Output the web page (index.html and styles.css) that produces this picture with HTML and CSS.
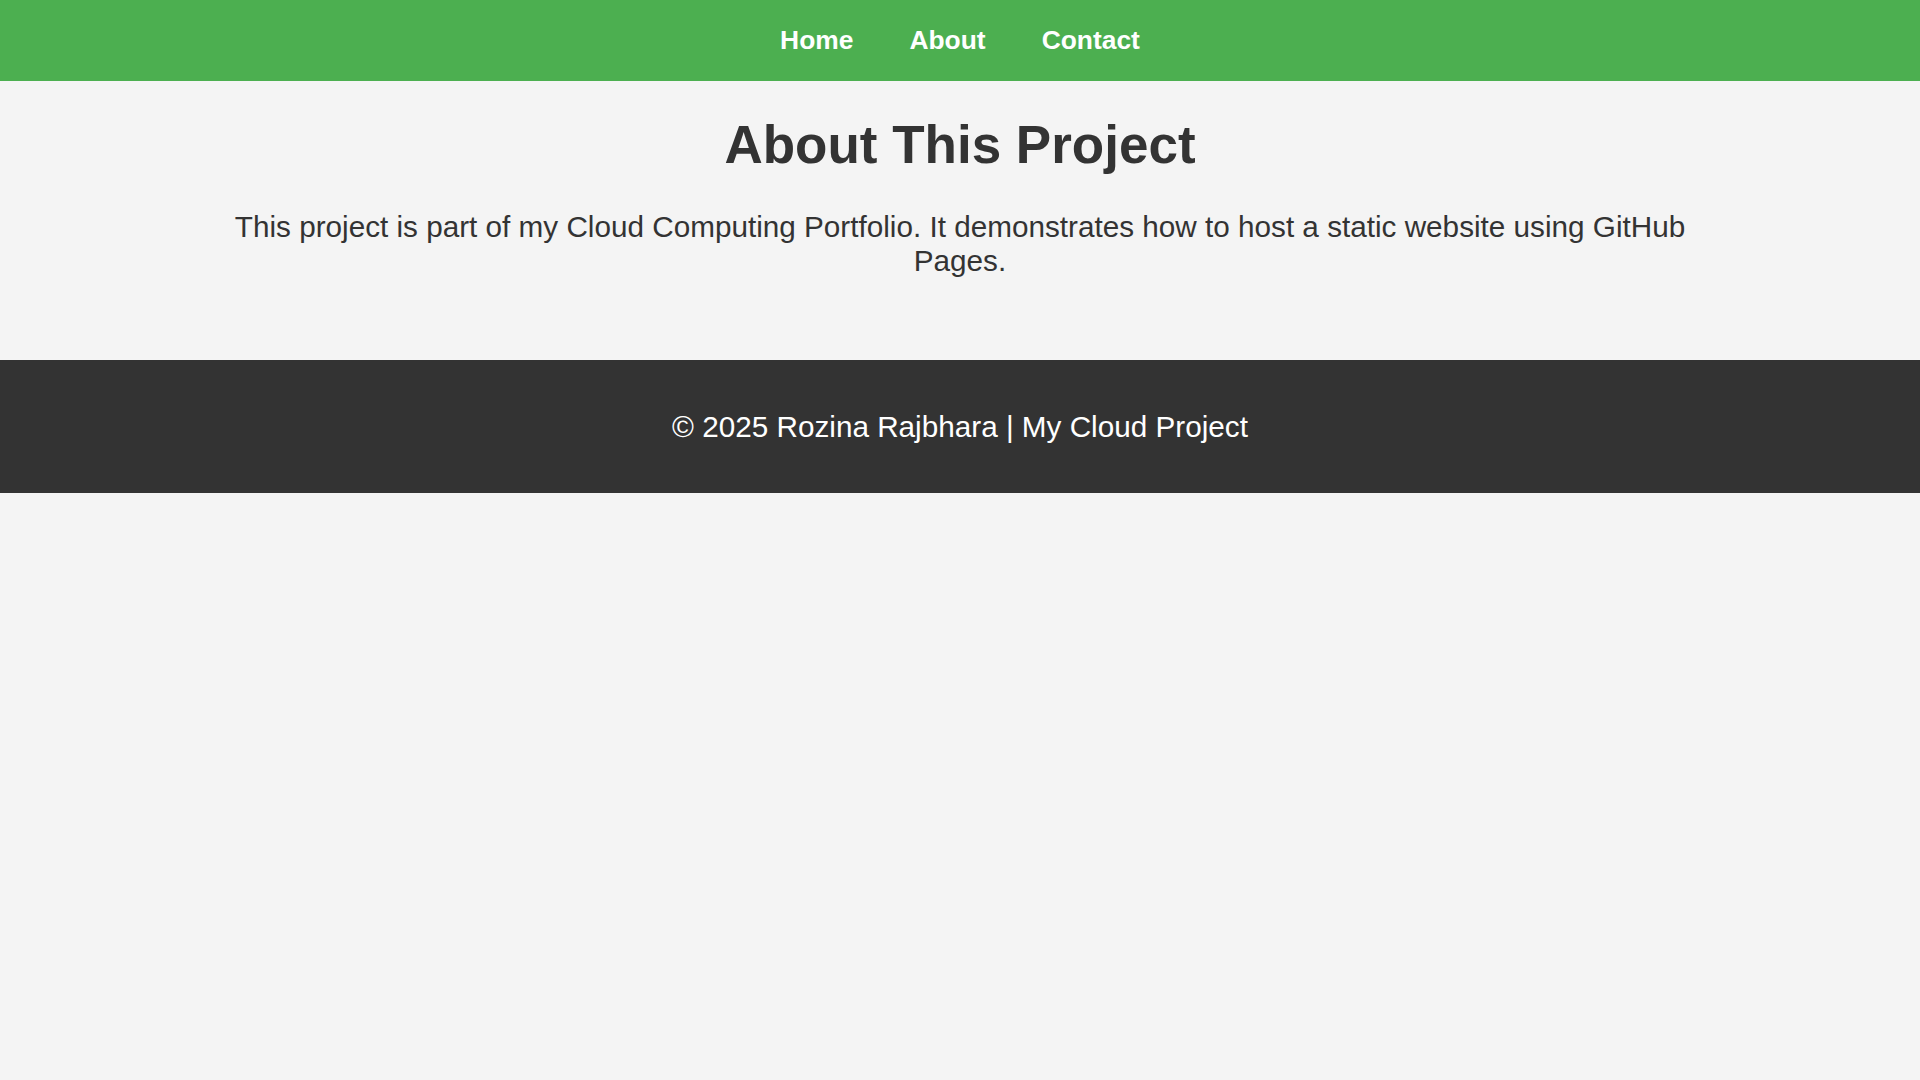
FILE: index.html
```html
<!DOCTYPE html>
<html lang="en">
<head>
<meta charset="utf-8">
<title>About This Project</title>
<link rel="stylesheet" href="styles.css">
</head>
<body>
<nav class="topnav">
  <a class="navlink" href="#">Home</a>
  <a class="navlink" href="#">About</a>
  <a class="navlink" href="#">Contact</a>
</nav>
<main class="content">
  <h1 class="title">About This Project</h1>
  <p class="lead">This project is part of my Cloud Computing Portfolio. It demonstrates how to host a static website using GitHub Pages.</p>
</main>
<footer class="site-footer">
  <p class="footer-text">&copy; 2025 Rozina Rajbhara | My Cloud Project</p>
</footer>
</body>
</html>
```
FILE: styles.css
```css
html, body {
  margin: 0;
  padding: 0;
}
body {
  background: #f4f4f4;
  color: #333333;
  font-family: "Liberation Sans", Arial, sans-serif;
}
.topnav {
  background: #4caf50;
  padding: 25px 0;
  display: flex;
  justify-content: center;
  gap: 56px;
}
.navlink {
  color: #ffffff;
  font-weight: bold;
  font-size: 26.4px;
  text-decoration: none;
}
.content {
  padding: 32.8px 200px 81.8px;
  text-align: center;
}
.title {
  margin: 0 0 35px;
  font-size: 53px;
  font-weight: bold;
  color: #333333;
}
.lead {
  margin: 0;
  font-size: 29.7px;
}
.site-footer {
  background: #333333;
  color: #ffffff;
  padding: 50px 0 49px;
  text-align: center;
}
.footer-text {
  margin: 0;
  font-size: 29.7px;
}
```
